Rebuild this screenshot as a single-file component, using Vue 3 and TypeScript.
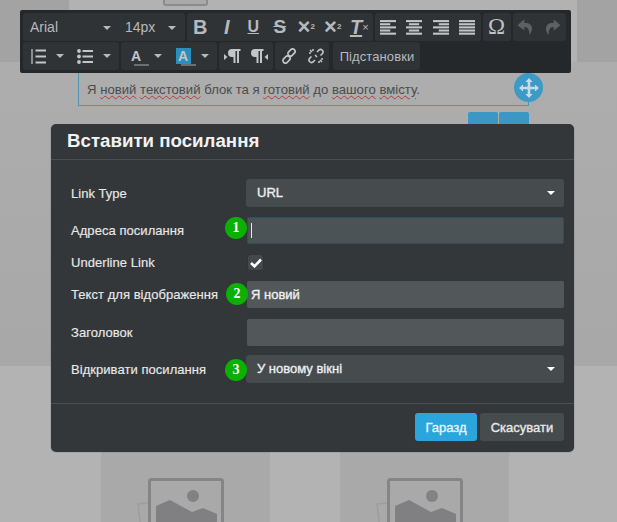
<script setup lang="ts">
const tiles = [0, 1];
const alignRows = {
  left: [[0, 14], [0, 9], [0, 14], [0, 9], [0, 14]],
  center: [[0, 14], [2.5, 9], [0, 14], [2.5, 9], [0, 14]],
  right: [[0, 14], [5, 9], [0, 14], [5, 9], [0, 14]],
  full: [[0, 14], [0, 14], [0, 14], [0, 14], [0, 14]],
};
</script>

<template>
  <div class="page">
    <!-- backdrop page behind the dialog -->
    <div class="band band-top"><div class="top-tile"><div class="top-frame"></div></div></div>
    <div class="band band-mid"></div>
    <div class="band band-bottom">
      <div v-for="t in tiles" :key="t" class="tile">
        <svg class="tile-icon" width="90" height="60" viewBox="0 0 90 60">
          <path d="M11 25 L1 26 L5 60" fill="none" stroke="#9e9e9e" stroke-width="1.5" />
          <rect x="12.5" y="1.5" width="73" height="62" rx="2" fill="none" stroke="#858585" stroke-width="3" />
          <circle cx="56" cy="18" r="6" fill="#828282" />
          <path d="M19 28 L33 22 L55 34 L66 30 L80 36 V60 H19 Z" fill="#808082" />
        </svg>
      </div>
    </div>

    <!-- text block being edited -->
    <div class="block">
      <p>Я <span class="sp">новий</span> <span class="sp">текстовий</span> блок та я <span class="sp">готовий</span> до <span class="sp">вашого</span> <span class="sp">вмісту</span>.</p>
      <div class="move">
        <svg width="20" height="20" viewBox="0 0 20 20">
          <path d="M10 0 L13.600 4 H11.300 V8.700 H16 V6.400 L20 10 L16 13.600 V11.300 H11.300 V16 H13.600 L10 20 L6.400 16 H8.700 V11.300 H4 V13.600 L0 10 L4 6.400 V8.700 H8.700 V4 H6.400 Z" fill="#c6dbe6" />
        </svg>
      </div>
      <div class="block-tabs"><span></span><span></span></div>
    </div>

    <!-- editor toolbar -->
    <div class="toolbar">
      <div class="tb-row">
        <div class="group font-group">
          <span class="tb-select w-font">Arial<i class="caret"></i></span>
          <span class="tb-select w-size">14px<i class="caret"></i></span>
        </div>
        <div class="group">
          <span class="btn glyph bold">B</span>
          <span class="btn glyph ital">I</span>
          <span class="btn glyph under">U</span>
          <span class="btn glyph strike">S</span>
          <span class="btn glyph sc">×<sup>2</sup></span>
          <span class="btn glyph sc">×<sub>2</sub></span>
          <span class="btn glyph clear"><em>T</em><sub>×</sub></span>
        </div>
        <div class="group">
          <span v-for="(rows, name) in alignRows" :key="name" class="btn">
            <svg width="16" height="15" viewBox="0 0 14 13">
              <rect v-for="(r, i) in rows" :key="i" :x="r[0]" :y="i * 2.75" :width="r[1]" height="1.800" fill="#c3c6c8" />
            </svg>
          </span>
        </div>
        <div class="group">
          <span class="btn omega">Ω</span>
        </div>
        <div class="group">
          <span class="btn">
            <svg width="18" height="18" viewBox="0 0 16 16"><path d="M6.500 1 L0.500 6.500 L6.500 11 V8 C9.500 8 11 10 11 15 C14 12 15.500 4 6.500 4.500 Z" fill="#5d6164" /></svg>
          </span>
          <span class="btn">
            <svg width="18" height="18" viewBox="0 0 16 16"><path d="M9.500 1 L15.500 6.500 L9.500 11 V8 C6.500 8 5 10 5 15 C2 12 0.500 4 9.500 4.500 Z" fill="#5d6164" /></svg>
          </span>
        </div>
      </div>
      <div class="tb-row">
        <div class="group pad-group">
          <span class="btn list-btn">
            <svg width="16" height="15" viewBox="0 0 16 15">
              <path d="M1 0 H3 V15 H1 Z" fill="#8b8f92" />
              <path d="M5.500 1.500 H16 M5.500 7.500 H16 M5.500 13.500 H16" stroke="#c3c6c8" stroke-width="2" />
            </svg>
          </span>
          <i class="caret solo"></i>
          <span class="btn list-btn">
            <svg width="16" height="15" viewBox="0 0 16 15">
              <circle cx="2" cy="2" r="1.900" fill="#c3c6c8" /><circle cx="2" cy="7.500" r="1.900" fill="#c3c6c8" /><circle cx="2" cy="13" r="1.900" fill="#c3c6c8" />
              <path d="M5.500 2 H16 M5.500 7.500 H16 M5.500 13 H16" stroke="#c3c6c8" stroke-width="2" />
            </svg>
          </span>
          <i class="caret solo"></i>
        </div>
        <div class="group pad-group">
          <span class="btn list-btn"><span class="color-a">A</span></span>
          <i class="caret solo"></i>
          <span class="btn list-btn"><span class="color-a filled">A</span></span>
          <i class="caret solo"></i>
        </div>
        <div class="group">
          <span class="btn para">
            <svg width="17" height="16" viewBox="0 0 17 16">
              <path d="M0 6 L3.500 9 L0 12 Z" fill="#c3c6c8" />
              <path d="M8 1 H16.500 V3 H15 V15 H13 V3 H11.500 V15 H9.500 V9 H8 A4 4 0 0 1 8 1 Z" fill="#c3c6c8" />
            </svg>
          </span>
          <span class="btn para">
            <svg width="17" height="16" viewBox="0 0 17 16">
              <path d="M17 6 L13.500 9 L17 12 Z" fill="#c3c6c8" />
              <path d="M4 1 H12.500 V3 H11 V15 H9 V3 H7.500 V15 H5.500 V9 H4 A4 4 0 0 1 4 1 Z" fill="#c3c6c8" />
            </svg>
          </span>
        </div>
        <div class="group">
          <span class="btn para">
            <svg width="16" height="16" viewBox="0 0 16 16" fill="none" stroke="#c3c6c8" stroke-width="1.700">
              <rect x="8" y="0.500" width="5" height="8" rx="2.500" transform="rotate(45 10.500 4.500)" />
              <rect x="3" y="7.500" width="5" height="8" rx="2.500" transform="rotate(45 5.500 11.500)" />
            </svg>
          </span>
          <span class="btn para">
            <svg width="16" height="16" viewBox="0 0 16 16" fill="none" stroke="#c3c6c8" stroke-width="1.600">
              <path d="M9 4 L11 2 A2.500 2.500 0 0 1 14.500 5.500 L12.500 7.500" />
              <path d="M7 12 L5 14 A2.500 2.500 0 0 1 1.500 10.500 L3.500 8.500" />
              <path d="M5 1 V3 M1 5 H3 M11 15 V13 M15 11 H13 M2 2 L4 4 M14 14 L12 12 M7 7 L9 9" />
            </svg>
          </span>
        </div>
        <div class="group text-group">Підстановки</div>
      </div>
    </div>

    <!-- link dialog -->
    <div class="modal">
      <div class="modal-head">Вставити посилання</div>
      <form class="modal-body" @submit.prevent>
        <div class="row row-select">
          <label>Link Type</label>
          <div class="select">URL<i class="caret white"></i></div>
        </div>
        <div class="row row-input">
          <label>Адреса посилання</label>
          <div class="input focus"><span class="cursor"></span></div>
        </div>
        <div class="row row-check">
          <label>Underline Link</label>
          <span class="check">
            <svg width="12" height="10" viewBox="0 0 12 10"><path d="M1 5 L4.500 8.300 L11 1.500" fill="none" stroke="#fff" stroke-width="2.600" /></svg>
          </span>
        </div>
        <div class="row row-input">
          <label>Текст для відображення</label>
          <div class="input">Я новий</div>
        </div>
        <div class="row row-input">
          <label>Заголовок</label>
          <div class="input"></div>
        </div>
        <div class="row row-select">
          <label>Відкривати посилання</label>
          <div class="select">У новому вікні<i class="caret white"></i></div>
        </div>
      </form>
      <div class="modal-foot">
        <button type="button" class="primary">Гаразд</button>
        <button type="button" class="secondary">Скасувати</button>
      </div>
      <span class="badge b1">1</span>
      <span class="badge b2">2</span>
      <span class="badge b3">3</span>
    </div>
  </div>
</template>

<style scoped>
.page {
  position: relative;
  display: flex;
  flex-direction: column;
  width: 617px;
  height: 522px;
  overflow: hidden;
  font-family: "Liberation Sans", Arial, sans-serif;
  background: #b3b3b3;
}

.band {
  flex: none;
}

.band-top {
  height: 62px;
  background: #a3a3a3;
  padding-left: 69px;
}

.top-tile {
  width: 508px;
  height: 62px;
  background: #b2b2b2;
  padding-left: 94px;
  box-sizing: border-box;
}

.top-frame {
  width: 45px;
  height: 6px;
  box-sizing: border-box;
  background: #a9a9a9;
  border: 2px solid #8c8c8c;
  border-top: none;
  border-radius: 0 0 3px 3px;
}

.band-mid {
  height: 304px;
  background: linear-gradient(#adadad, #a8a8a8);
}

.band-bottom {
  height: 156px;
  display: flex;
  gap: 70px;
  padding-left: 101px;
  background: #b3b3b3;
  overflow: hidden;
}

.tile {
  width: 169px;
  background: #a9a9a9;
  padding: 112px 0 0 36px;
  box-sizing: border-box;
}

.tile-icon {
  display: block;
}

.block {
  position: absolute;
  left: 78px;
  top: 62px;
  width: 451px;
  height: 44px;
  box-sizing: border-box;
  border: 1px solid #4f93b5;
  border-top: none;
}

.block p {
  margin: 0;
  padding: 20px 0 0 8px;
  font-size: 13.150px;
  line-height: 15px;
  color: #4b4b4b;
}

.sp {
  text-decoration: underline wavy #b03a3a 1px;
}

.move {
  position: absolute;
  right: -15px;
  top: 11px;
  width: 29px;
  height: 29px;
  border-radius: 50%;
  background: #3d9ac7;
  display: flex;
  align-items: center;
  justify-content: center;
}

.block-tabs {
  position: absolute;
  right: -1px;
  top: 50px;
  display: flex;
  gap: 1px;
  width: 61px;
  height: 20px;
}

.block-tabs span {
  flex: 1;
  background: #3d97c4;
  border-radius: 2px 2px 0 0;
}

.toolbar {
  position: absolute;
  left: 20px;
  top: 10px;
  width: 551px;
  height: 63px;
  box-sizing: border-box;
  padding: 3px;
  display: flex;
  flex-direction: column;
  gap: 1px;
  background: #24282a;
  border-radius: 2px;
  color: #b6babd;
}

.tb-row {
  display: flex;
  gap: 2px;
  height: 28px;
}

.group {
  display: flex;
  align-items: center;
  height: 28px;
  background: #2f3336;
  border-radius: 3px;
}

.pad-group {
  padding-right: 2px;
}

.tb-select {
  position: relative;
  display: flex;
  align-items: center;
  height: 28px;
  font-size: 14px;
  box-sizing: border-box;
}

.w-font {
  width: 95px;
  padding-left: 7px;
}

.w-font .caret {
  right: 7px;
}

.w-size {
  width: 67px;
  padding-left: 7px;
}

.caret {
  position: absolute;
  top: 13px;
  right: 9px;
  width: 0;
  height: 0;
  border-left: 4px solid transparent;
  border-right: 4px solid transparent;
  border-top: 4px solid #b6babd;
}

.caret.solo {
  position: static;
  margin: 0 6px 0 3px;
  flex: none;
}

.btn {
  width: 26.500px;
  height: 28px;
  display: flex;
  align-items: center;
  justify-content: center;
  flex: none;
}

.glyph {
  font-size: 18px;
  color: #b6babd;
}

.bold {
  font-weight: 700;
  font-size: 20px;
}

.ital {
  font-style: italic;
  font-weight: 700;
  font-size: 20px;
}

.under {
  text-decoration: underline;
  font-size: 16px;
  font-weight: 700;
}

.strike {
  text-decoration: line-through;
  font-size: 19px;
  font-weight: 700;
}

.sc {
  font-size: 22px;
  font-weight: 700;
}

.sc sup,
.sc sub {
  font-size: 8px;
  line-height: 0;
}

.clear em {
  font-size: 20px;
  font-weight: 700;
  text-decoration: underline;
}

.clear sub {
  font-size: 11px;
  line-height: 0;
}

.omega {
  width: 28px;
  font-size: 23px;
  font-family: "Liberation Serif", serif;
  color: #bfc3c5;
}

.list-btn {
  width: 30px;
}

.color-a {
  position: relative;
  display: block;
  width: 15px;
  height: 16px;
  font-size: 14px;
  font-weight: 700;
  line-height: 16px;
  text-align: center;
  color: #c3c6c8;
}

.color-a::after {
  content: "";
  position: absolute;
  left: 5px;
  bottom: -2px;
  width: 15px;
  height: 2px;
  background: #6a6e70;
}

.color-a.filled {
  background: #2b8fbe;
}

.para {
  width: 27px;
}

.text-group {
  margin-left: 2px;
  width: 87px;
  padding-left: 1px;
  box-sizing: border-box;
  justify-content: center;
  font-size: 13px;
  letter-spacing: 0.1px;
}

.modal {
  position: absolute;
  left: 51px;
  top: 124px;
  width: 523px;
  height: 327px;
  box-sizing: border-box;
  display: flex;
  flex-direction: column;
  background: #33373a;
  border-radius: 5px;
  box-shadow: 0 1px 1px #26292b;
  color: #e8e8e8;
}

.modal-head {
  height: 36px;
  box-sizing: border-box;
  padding: 4px 0 0 16px;
  font-size: 18.700px;
  line-height: 26px;
  font-weight: 700;
  color: #f2f2f2;
  border-bottom: 1px solid #4a4e50;
}

.modal-body {
  flex: 1;
  display: flex;
  flex-direction: column;
  padding: 19px 10px 0 20px;
}

.row {
  display: flex;
  align-items: center;
  font-size: 13px;
}

.row label {
  width: 176px;
  flex: none;
  letter-spacing: 0.05px;
  -webkit-text-stroke: 0.15px #e8e8e8;
}

.row-select {
  height: 28px;
}

.row-input {
  height: 27px;
}

.row-check {
  height: 15px;
}

.row:nth-child(1) {
  margin-bottom: 10px;
}

.row:nth-child(2) {
  margin-bottom: 11px;
}

.row:nth-child(3) {
  margin-bottom: 11px;
}

.row:nth-child(4) {
  margin-bottom: 11px;
}

.row:nth-child(5) {
  margin-bottom: 9px;
}

.select {
  position: relative;
  width: 318px;
  margin-left: -1px;
  height: 28px;
  box-sizing: border-box;
  padding: 0 11px;
  line-height: 27px;
  background: #464b4e;
  border-radius: 3px;
  color: #efefef;
  -webkit-text-stroke: 0.35px #efefef;
}

.caret.white {
  top: 12px;
  right: 9px;
  border-top-color: #fff;
}

.input {
  width: 317px;
  height: 27px;
  box-sizing: border-box;
  padding: 0 4px;
  line-height: 27px;
  background: #52585a;
  border-radius: 2px;
  color: #efefef;
  -webkit-text-stroke: 0.35px #efefef;
  display: flex;
  align-items: center;
}

.input.focus {
  padding: 0 3px;
  background: #4c5356;
  border: 1px solid #2f4d60;
}

.cursor {
  display: block;
  width: 1px;
  height: 15px;
  background: #e8e8e8;
}

.check {
  display: flex;
  align-items: center;
  justify-content: center;
  width: 15px;
  height: 15px;
  margin-left: 1px;
  background: #44484b;
  border-radius: 2px;
  box-shadow: 0 0 1px #222;
}

.modal-foot {
  height: 48px;
  box-sizing: border-box;
  display: flex;
  justify-content: flex-end;
  gap: 3px;
  padding: 9px 10px 0 0;
  border-top: 1px solid #4a4e50;
}

.modal-foot button {
  height: 28px;
  border: none;
  border-radius: 3px;
  padding: 0;
  font-family: inherit;
  font-size: 13px;
}

.primary {
  width: 62px;
  background: #2ba6dc;
  color: #e8f4fa;
  -webkit-text-stroke: 0.35px #e8f4fa;
}

.secondary {
  width: 84px;
  background: #464b4e;
  color: #e8e8e8;
  -webkit-text-stroke: 0.35px #e8e8e8;
}

.badge {
  position: absolute;
  width: 22px;
  height: 22px;
  border-radius: 50%;
  background: #0bb100;
  color: #fff;
  font-family: "Liberation Serif", serif;
  font-size: 14px;
  font-weight: 700;
  line-height: 22px;
  text-align: center;
}

.b1 {
  left: 174px;
  top: 93px;
}

.b2 {
  left: 175px;
  top: 159px;
}

.b3 {
  left: 174px;
  top: 235px;
}
</style>
